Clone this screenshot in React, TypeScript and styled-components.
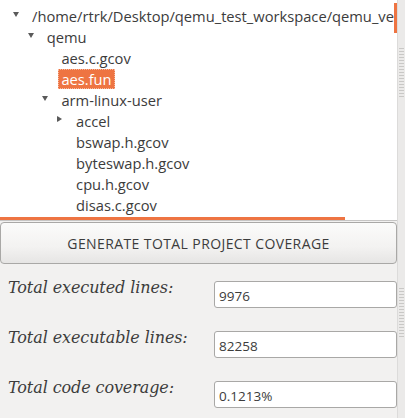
import React from "react";
import styled, { createGlobalStyle } from "styled-components";

const GlobalStyle = createGlobalStyle`
  html, body {
    margin: 0;
    padding: 0;
    background: #f2f1f0;
  }
  * {
    box-sizing: border-box;
  }
`;

interface TreeNode {
  label: string;
  depth: number;
  expander?: "open" | "closed";
  selected?: boolean;
}

const nodes: TreeNode[] = [
  { label: "/home/rtrk/Desktop/qemu_test_workspace/qemu_vers", depth: 0, expander: "open" },
  { label: "qemu", depth: 1, expander: "open" },
  { label: "aes.c.gcov", depth: 2 },
  { label: "aes.fun", depth: 2, selected: true },
  { label: "arm-linux-user", depth: 2, expander: "open" },
  { label: "accel", depth: 3, expander: "closed" },
  { label: "bswap.h.gcov", depth: 3 },
  { label: "byteswap.h.gcov", depth: 3 },
  { label: "cpu.h.gcov", depth: 3 },
  { label: "disas.c.gcov", depth: 3 },
];

const totals = [
  { label: "Total executed lines:", value: "9976" },
  { label: "Total executable lines:", value: "82258" },
  { label: "Total code coverage:", value: "0.1213%" },
];

const Window = styled.div`
  display: flex;
  width: 405px;
  height: 418px;
  overflow: hidden;
  background: #f2f1f0;
`;

const Main = styled.div`
  width: 397px;
  display: flex;
  flex-direction: column;
`;

const PaneHandle = styled.div`
  flex: 1;
  background: #ebeae9;
  border-left: 1px solid #dcdbda;
  display: flex;
  flex-direction: column;
  align-items: center;
  padding-top: 48px;
`;

const Grip = styled.div<{ $gap: number }>`
  width: 5px;
  height: 50px;
  margin-bottom: ${(p) => p.$gap}px;
  background: repeating-linear-gradient(
    to bottom,
    #c9c8c6 0px,
    #c9c8c6 1px,
    transparent 1px,
    transparent 3px
  );
`;

const TreePane = styled.div`
  position: relative;
  height: 221px;
  background: #ffffff;
  border-bottom: 1px solid #c6c5c4;
  overflow: hidden;
  padding-top: 5px;
`;

const Row = styled.div<{ $depth: number }>`
  position: relative;
  height: 21px;
  display: flex;
  align-items: center;
  padding-left: ${(p) => 32 + p.$depth * 14.7}px;
  white-space: nowrap;
`;

const Expander = styled.span<{ $depth: number; $open: boolean }>`
  position: absolute;
  left: ${(p) => 13 + p.$depth * 14.7}px;
  top: ${(p) => (p.$open ? 7 : 6)}px;
  width: 0;
  height: 0;
  ${(p) =>
    p.$open
      ? `
    border-left: 3px solid transparent;
    border-right: 3px solid transparent;
    border-top: 5px solid #5a5a5a;
  `
      : `
    border-top: 3.5px solid transparent;
    border-bottom: 3.5px solid transparent;
    border-left: 5px solid #5a5a5a;
  `}
`;

const Label = styled.span<{ $selected?: boolean }>`
  font-family: "Open Sans", "Noto Sans", sans-serif;
  font-size: 14.7px;
  line-height: 20px;
  padding: 0 3px;
  margin-left: -3px;
  color: ${(p) => (p.$selected ? "#ffffff" : "#3c3c3c")};
  background: ${(p) => (p.$selected ? "#ee7442" : "transparent")};
  outline: ${(p) => (p.$selected ? "1px dotted #f7b99e" : "none")};
  outline-offset: -1px;
`;

const VScroll = styled.div`
  position: absolute;
  right: 0;
  top: 3px;
  width: 3px;
  height: 30px;
  background: #ee7442;
`;

const HScroll = styled.div`
  position: absolute;
  left: 0;
  bottom: 0;
  width: 345px;
  height: 3px;
  background: #ee7442;
`;

const GenerateButton = styled.button`
  margin-top: 1px;
  height: 42px;
  width: 100%;
  padding: 0;
  border: 1px solid #a9a8a6;
  border-radius: 4px;
  background: linear-gradient(to bottom, #fbfbfa 0%, #f3f2f1 60%, #e6e5e4 100%);
  font-family: "Open Sans", "Noto Sans", sans-serif;
  font-size: 14px;
  letter-spacing: 0.4px;
  color: #3c3c3c;
  cursor: pointer;
`;

const Totals = styled.div`
  display: flex;
  flex-direction: column;
  gap: 23px;
  padding: 17px 0 0 8px;
`;

const TotalRow = styled.div`
  display: grid;
  grid-template-columns: 206px 183px;
  align-items: start;
  height: 27px;
`;

const TotalLabel = styled.span`
  font-family: "DejaVu Serif", serif;
  font-style: italic;
  font-size: 16px;
  line-height: 18px;
  letter-spacing: -0.1px;
  color: #3c3c3c;
  margin-top: -2px;
  white-space: nowrap;
`;

const TotalField = styled.input`
  height: 27px;
  width: 100%;
  border: 1px solid #a9a8a6;
  border-radius: 3px;
  background: #ffffff;
  padding: 2px 4px 0;
  font-family: "Open Sans", "Noto Sans", sans-serif;
  font-size: 13.5px;
  color: #3c3c3c;
  outline: none;
`;

export default function App() {
  return (
    <>
      <GlobalStyle />
      <Window>
        <Main>
          <TreePane>
            {nodes.map((n) => (
              <Row key={n.label} $depth={n.depth}>
                {n.expander && (
                  <Expander $depth={n.depth} $open={n.expander === "open"} />
                )}
                <Label $selected={n.selected}>{n.label}</Label>
              </Row>
            ))}
            <VScroll />
            <HScroll />
          </TreePane>
          <GenerateButton>GENERATE TOTAL PROJECT COVERAGE</GenerateButton>
          <Totals>
            {totals.map((t) => (
              <TotalRow key={t.label}>
                <TotalLabel>{t.label}</TotalLabel>
                <TotalField readOnly value={t.value} />
              </TotalRow>
            ))}
          </Totals>
        </Main>
        <PaneHandle>
          <Grip $gap={190} />
          <Grip $gap={0} />
        </PaneHandle>
      </Window>
    </>
  );
}
